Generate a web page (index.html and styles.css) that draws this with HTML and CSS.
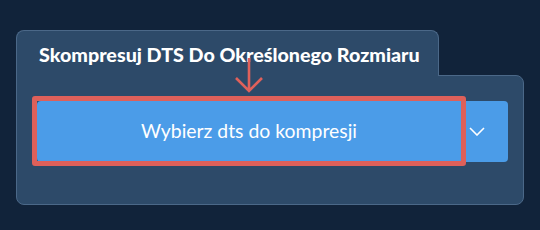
FILE: index.html
```html
<!DOCTYPE html>
<html>
<head>
  <title>Kompresja DTS</title>
  <link rel="stylesheet" href="styles.css">
</head>
<body>
  <div class="panel">
    <div class="panel-tab">Skompresuj DTS Do Określonego Rozmiaru</div>
    <div class="panel-body">
      <div class="split-button">
        <button class="main-btn">
          Wybierz dts do kompresji
          <span class="highlight"></span>
          <svg class="pointer" width="30" height="36" viewBox="0 0 30 36">
            <path d="M15 1 L15 34 M2 21 L15 34 L28 21" fill="none" stroke="#e0615b" stroke-width="2.6" />
          </svg>
        </button>
        <button class="toggle-btn">
          <svg width="16" height="9" viewBox="0 0 16 9">
            <path d="M1 1 L8 8 L15 1" fill="none" stroke="white" stroke-width="1.6" />
          </svg>
        </button>
      </div>
    </div>
  </div>
</body>
</html>
```

FILE: styles.css
```css
body {
  font-family: Lato, 'Open Sans', sans-serif;
  background-color: #11233a;
  color: white;
  margin: 0;
  padding: 30px 0 0 16px;
}

.panel {
  width: 508px;
}

.panel-tab {
  position: relative;
  z-index: 1;
  width: 423px;
  height: 46px;
  margin-bottom: -1px;
  padding: 14px 0 0 22px;
  box-sizing: border-box;
  background-color: #2d4a69;
  border: 1px solid #4b6888;
  border-bottom: none;
  border-radius: 8px 8px 0 0;
  font-size: 19.7px;
  font-weight: 900;
  line-height: 1;
}

.panel-body {
  width: 508px;
  height: 130px;
  box-sizing: border-box;
  background-color: #2d4a69;
  border: 1px solid #4b6888;
  border-radius: 0 8px 8px 8px;
  padding: 25px 15px 0 20px;
}

.split-button {
  display: flex;
  height: 61px;
}

.main-btn {
  position: relative;
  width: 424px;
  border: none;
  background-color: #4b9ce8;
  color: white;
  font-family: Lato, 'Open Sans', sans-serif;
  font-size: 19.4px;
  border-radius: 4px 0 0 4px;
  padding: 0 0 2px 0;
}

.toggle-btn {
  width: 47px;
  border: none;
  background-color: #4b9ce8;
  border-radius: 0 4px 4px 0;
  padding: 0 0 0 8px;
  display: flex;
  align-items: center;
}

.highlight {
  position: absolute;
  top: -5px;
  left: -5px;
  right: -5px;
  bottom: -4px;
  border: 5px solid #de605a;
  border-radius: 3px;
}

.pointer {
  position: absolute;
  z-index: 2;
  top: -44px;
  left: 197px;
}
```
